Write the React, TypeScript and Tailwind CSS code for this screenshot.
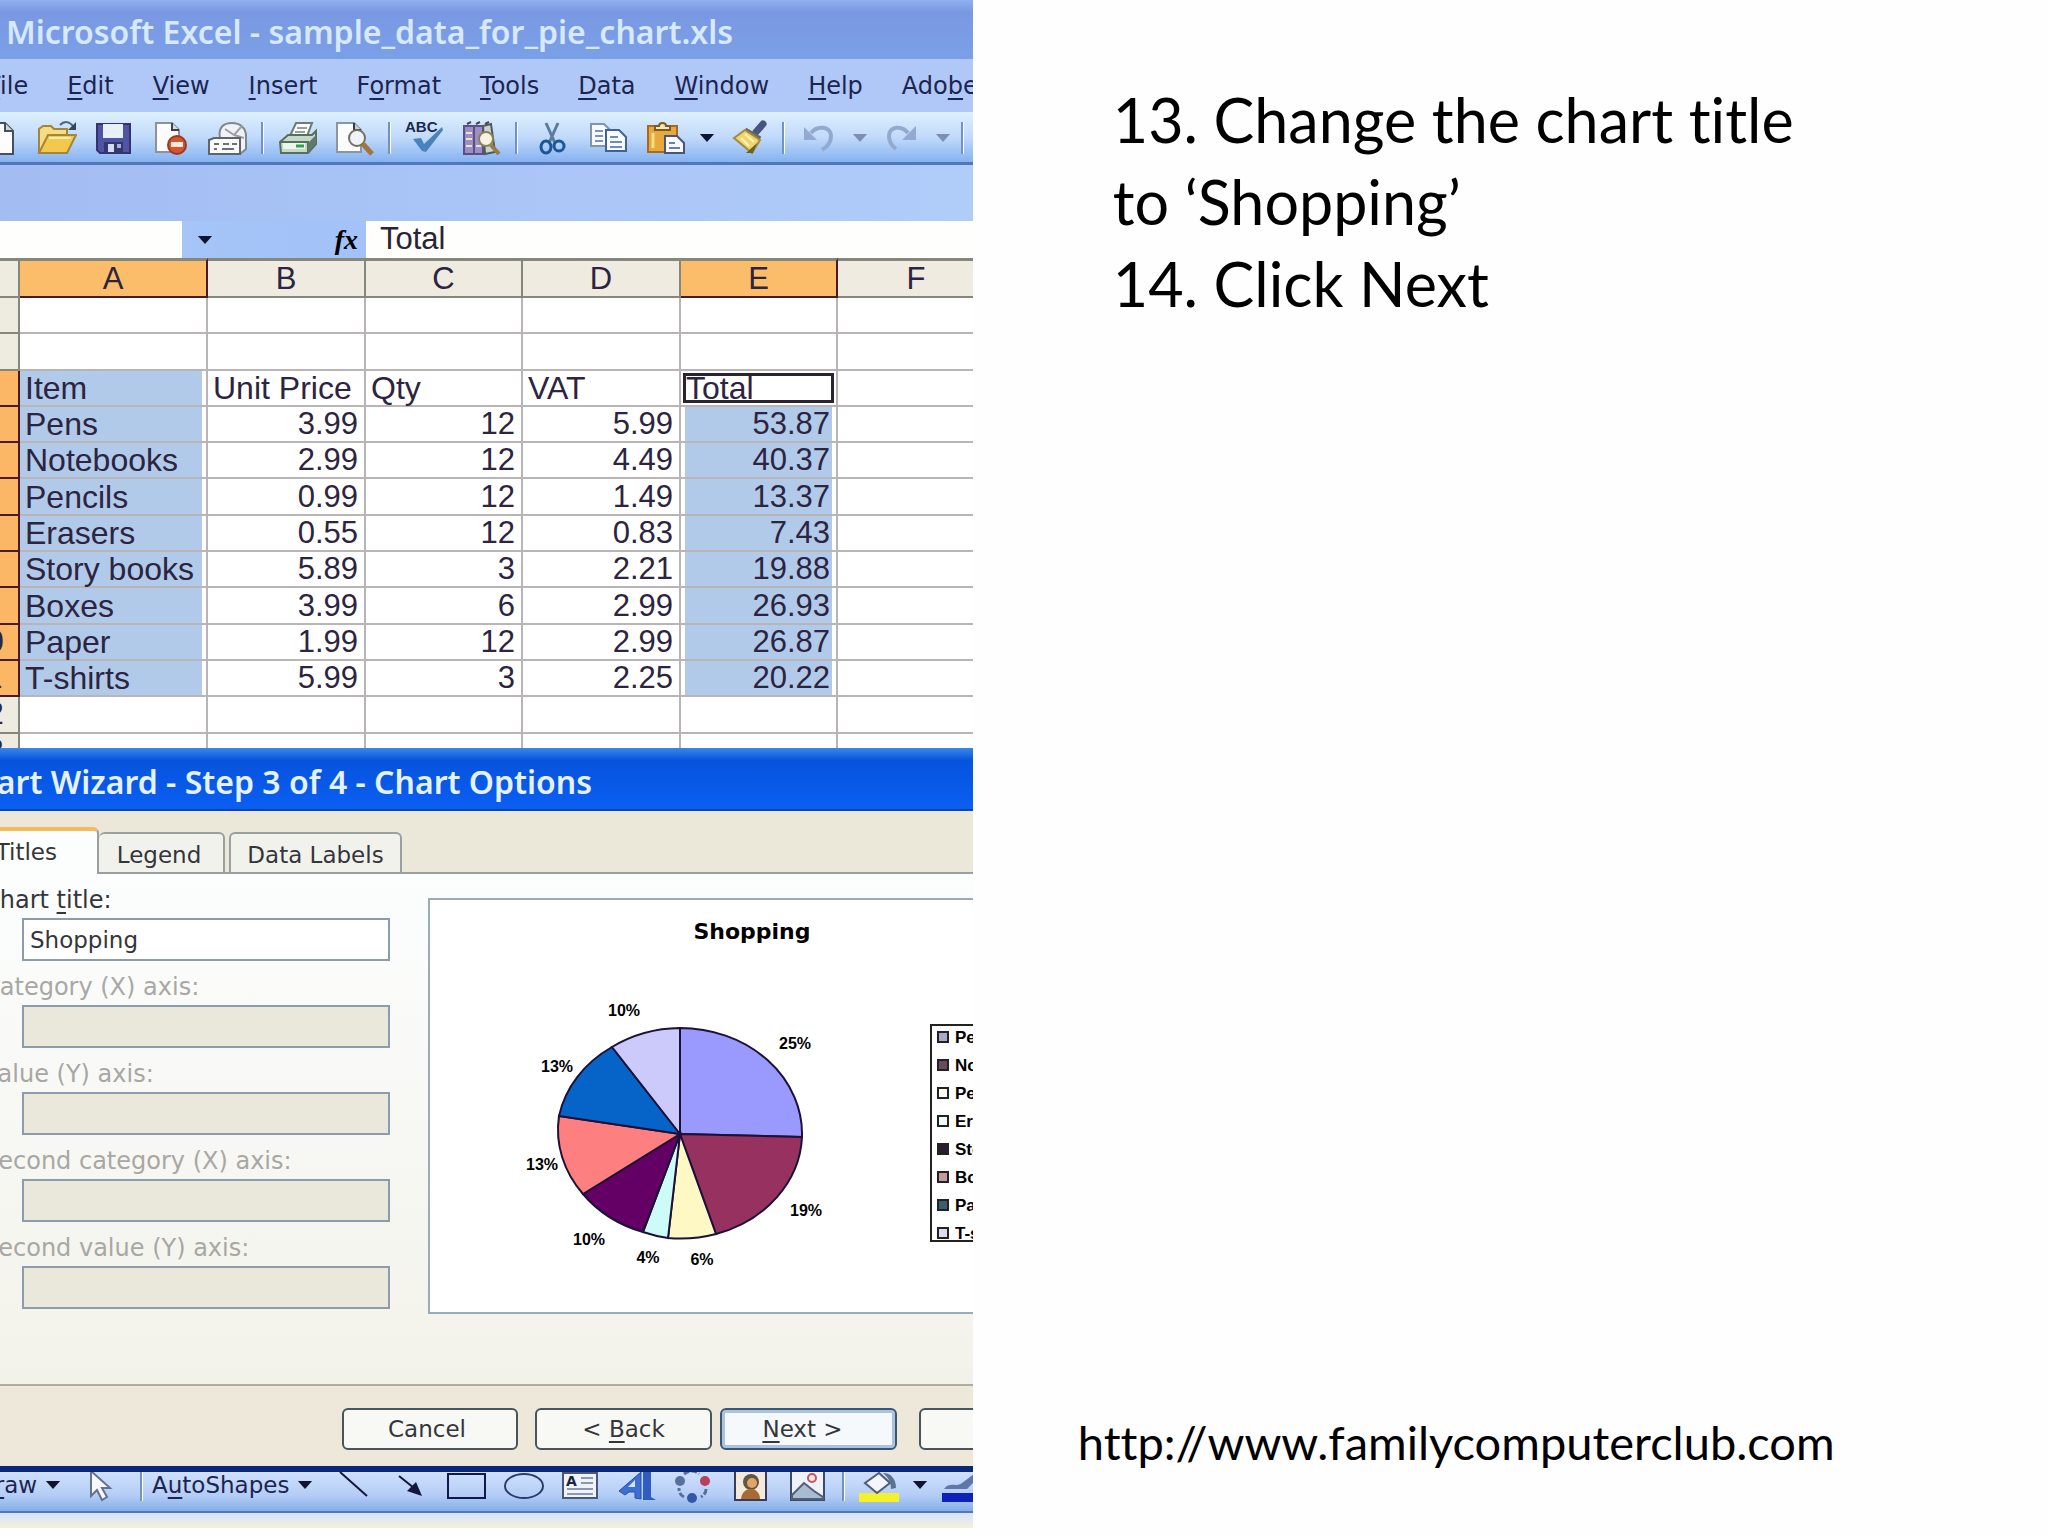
import type { ReactNode } from "react";

const menuItems = [
  { before: "", key: "F", after: "ile" },
  { before: "", key: "E", after: "dit" },
  { before: "", key: "V", after: "iew" },
  { before: "", key: "I", after: "nsert" },
  { before: "F", key: "o", after: "rmat" },
  { before: "", key: "T", after: "ools" },
  { before: "", key: "D", after: "ata" },
  { before: "", key: "W", after: "indow" },
  { before: "", key: "H", after: "elp" },
  { before: "Ado", key: "b", after: "e" },
];

const columns = ["A", "B", "C", "D", "E", "F"];

const rows: string[][] = [
  ["", "", "", "", ""],
  ["", "", "", "", ""],
  ["Item", "Unit Price", "Qty", "VAT", "Total"],
  ["Pens", "3.99", "12", "5.99", "53.87"],
  ["Notebooks", "2.99", "12", "4.49", "40.37"],
  ["Pencils", "0.99", "12", "1.49", "13.37"],
  ["Erasers", "0.55", "12", "0.83", "7.43"],
  ["Story books", "5.89", "3", "2.21", "19.88"],
  ["Boxes", "3.99", "6", "2.99", "26.93"],
  ["Paper", "1.99", "12", "2.99", "26.87"],
  ["T-shirts", "5.99", "3", "2.25", "20.22"],
  ["", "", "", "", ""],
  ["", "", "", "", ""],
];

const axisFields = [
  { id: "category-x", label: "Category (X) axis:" },
  { id: "value-y", label: "Value (Y) axis:" },
  { id: "second-category-x", label: "Second category (X) axis:" },
  { id: "second-value-y", label: "Second value (Y) axis:" },
];

// outer edge of every slice, clockwise from the top
const slices = [
  { from: [250, 128], to: [372, 237], color: "#9a99fd" },
  { from: [372, 237], to: [286, 334], color: "#97315f" },
  { from: [286, 334], to: [238, 338], color: "#fdf8c4" },
  { from: [238, 338], to: [213, 332], color: "#cdfbf8" },
  { from: [213, 332], to: [153, 294], color: "#640065" },
  { from: [153, 294], to: [129, 216], color: "#fd7f7f" },
  { from: [129, 216], to: [182, 147], color: "#0664c8" },
  { from: [182, 147], to: [250, 128], color: "#ccc9fb" },
];

const percents = [
  { x: 365, y: 149, text: "25%" },
  { x: 376, y: 316, text: "19%" },
  { x: 272, y: 365, text: "6%" },
  { x: 218, y: 363, text: "4%" },
  { x: 159, y: 345, text: "10%" },
  { x: 112, y: 270, text: "13%" },
  { x: 127, y: 172, text: "13%" },
  { x: 194, y: 116, text: "10%" },
];

const legend = [
  { name: "Pens", color: "#aaa9cc" },
  { name: "Notebooks", color: "#6b4a5e" },
  { name: "Pencils", color: "#fffdf2" },
  { name: "Erasers", color: "#eefcfc" },
  { name: "Story books", color: "#2b1a30" },
  { name: "Boxes", color: "#c49a9e" },
  { name: "Paper", color: "#3c5f6c" },
  { name: "T-shirts", color: "#dcdcec" },
];

export default function App() {
  return (
    <main className="flex min-h-screen bg-[#fefefe] text-black">
      <section className="w-[47.5%] shrink-0 overflow-hidden">
        <ExcelWindow />
        <ChartWizard />
        <DrawingToolbar />
      </section>
      <section className="flex grow flex-col justify-between pt-[79px] pb-[66px] font-['Lato',sans-serif] [font-variant-ligatures:none]">
        <div className="pl-[140px] text-[61px] leading-[82px]">
          <p>13. Change the chart title<br />to ‘Shopping’</p>
          <p>14. Click Next</p>
        </div>
        <a href="http://www.familycomputerclub.com" className="ml-[105px] text-[47px] leading-[56px]">http://www.familycomputerclub.com</a>
      </section>
    </main>
  );
}

function ExcelWindow() {
  return (
    <div className="font-['DejaVu_Sans',sans-serif] text-[#1c2450]">
      <h1 className="h-[59px] overflow-hidden bg-linear-to-b from-[#8fb0f0] via-[#7a98e2] via-20% to-[#7aa0e8] pl-[6px] font-['Noto_Sans',sans-serif] text-[32px] leading-[64px] font-semibold whitespace-nowrap text-[#d6e9fd]">
        Microsoft Excel - sample_data_for_pie_chart.xls
      </h1>
      <nav className="-ml-3 flex h-[53px] items-center gap-[39px] bg-[#b0c8f8] text-[24px] whitespace-nowrap">
        {menuItems.map((m) => (
          <button key={m.key + m.after}>{m.before}<u className="underline-offset-4">{m.key}</u>{m.after}</button>
        ))}
      </nav>
      <StandardToolbar />
      <div className="h-14 bg-linear-to-r from-[#a3bdf3] to-[#b0ccf9]" />
      <div className="flex h-[37px] bg-linear-to-r from-[#a9c8f8] to-[#96b8f8]">
        <input aria-label="Name box" className="w-[182px] shrink-0 bg-[#fefefc]" />
        <button aria-label="Open name list" className="flex w-[46px] shrink-0 items-center justify-center"><Caret /></button>
        <button className="w-[138px] shrink-0 pr-2 text-right font-['Liberation_Serif',serif] text-[28px] leading-[36px] font-bold text-black italic">fx</button>
        <input aria-label="Formula" defaultValue="Total" className="min-w-0 grow bg-[#fefefc] pl-[14px] font-['Liberation_Sans',sans-serif] text-[31px] text-[#2a2434]" />
      </div>
      <Sheet />
    </div>
  );
}

function Sheet() {
  const isSelected = (row: number) => row >= 2 && row <= 10;

  return (
    <div className="h-[490px] overflow-hidden bg-white font-['Liberation_Sans',sans-serif] text-[#2c2440]">
      <table className="-ml-[45px] h-[512px] w-[1041px] table-fixed border-separate border-spacing-0 text-[31px] leading-[34px]">
        <colgroup>
          <col className="w-[65px]" />
          <col className="w-[188px]" />
          <col className="w-[158px]" />
          <col className="w-[157px]" />
          <col className="w-[158px]" />
          <col className="w-[157px]" />
          <col className="w-[158px]" />
        </colgroup>
        <thead>
          <tr className="h-10">
            <td className="border-t-3 border-r-2 border-b-2 border-[#85867c] bg-[#eeebe0]" />
            {columns.map((c) => (
              <th
                key={c}
                scope="col"
                className={`border-t-3 border-r-2 border-b-2 border-t-[#85867c] p-0 font-normal ${c === "A" || c === "E" ? "border-r-[#4a1a2c] border-b-[#4a1a2c] bg-[#fcbd6a]" : "border-r-[#85867c] border-b-[#85867c] bg-[#efebe1]"}`}
              >
                {c}
              </th>
            ))}
          </tr>
        </thead>
        <tbody>
          {rows.map((row, r) => (
            <tr key={r}>
              <th scope="row" className={`border-r-2 border-b-2 p-0 font-normal ${isSelected(r) ? "border-[#4a1a2c] bg-[#fcb766]" : "border-[#85867c] bg-[#eeebe0]"}`}>
                {r + 1}
              </th>
              {row.map((value, c) => (
                <td
                  key={c}
                  className={`border-r-2 border-b-2 border-[#b9b4b6] p-0 whitespace-nowrap ${r > 2 && c > 0 ? "pr-1.5 text-right" : "pl-[5px] text-[32px]"} ${isSelected(r) && c === 0 ? "bg-[#b1cae9] shadow-[inset_-4px_0_0_#ffffff]" : ""} ${isSelected(r) && r > 2 && c === 4 ? "bg-[#b1cae9] shadow-[inset_4px_0_0_#ffffff,inset_-4px_0_0_#ffffff]" : ""} ${r === 2 && c === 4 ? "shadow-[inset_0_0_0_2px_#ffffff,inset_0_0_0_5px_#2a2430]" : ""}`}
                >
                  {value}
                </td>
              ))}
              <td className="border-r-2 border-b-2 border-[#b9b4b6]" />
            </tr>
          ))}
        </tbody>
      </table>
    </div>
  );
}

function ChartWizard() {
  return (
    <div className="font-['DejaVu_Sans',sans-serif] text-[23px] text-[#35353c]">
      <h2 className="h-[63px] overflow-hidden border-b-2 border-[#0a45b8] bg-linear-to-b from-[#3a86ea] via-[#0753dd] via-20% to-[#0a5ff2] font-['Noto_Sans',sans-serif] text-[32px] leading-[68px] font-semibold whitespace-nowrap text-[#e4f2ff]">
        <span className="-ml-[44px]">Chart Wizard - Step 3 of 4 - Chart Options</span>
      </h2>
      <div role="tablist" className="flex h-[63px] items-end border-b-2 border-[#9aa0a0] bg-[#ebe8d9] whitespace-nowrap">
        <button role="tab" aria-selected="true" className="-mb-0.5 h-[47px] w-[99px] rounded-tr-md border-t-4 border-r-2 border-t-[#f3bb5c] border-r-[#9aa0a0] bg-[#fcfdfd] pr-[40px]">
          <span className="float-right">Titles</span>
        </button>
        <button role="tab" aria-selected="false" className="h-10 w-[126px] rounded-t-md border-2 border-b-0 border-l-0 border-[#9aa0a0] bg-[#f2f2ec] pt-1 pr-1">Legend</button>
        <button role="tab" aria-selected="false" className="ml-1 h-10 w-[173px] rounded-t-md border-2 border-b-0 border-[#9aa0a0] bg-[#f2f2ec] pt-1">Data Labels</button>
      </div>
      <div className="flex h-[512px] border-b-2 border-[#adada2] bg-linear-to-b from-[#fcfefe] to-[#f3f2ea]">
        <form className="w-[428px] shrink-0 whitespace-nowrap">
          <label htmlFor="chart-title" className="-ml-[17px] flex h-11 items-end text-[24px]">Chart&nbsp;<u className="underline-offset-4">t</u>itle:</label>
          <input id="chart-title" defaultValue="Shopping" className="ml-[22px] block h-[43px] w-[368px] border-2 border-[#8c9cac] bg-white pl-1.5" />
          {axisFields.map((f) => (
            <div key={f.id} className="text-[#a9a7a4]">
              <label htmlFor={f.id} className="-ml-[17px] flex h-11 items-end text-[24px]">{f.label}</label>
              <input id={f.id} disabled className="ml-[22px] block h-[43px] w-[368px] border-2 border-[#8c9cac] bg-[#eae8da]" />
            </div>
          ))}
        </form>
        <div className="mt-6 h-[416px] grow overflow-hidden border-2 border-r-0 border-[#9aabba] bg-white">
          <PieChart />
        </div>
      </div>
      <div className="flex h-[80px] items-start overflow-hidden bg-[#ede8d9] pt-[22px] pl-[342px]">
        <button className="h-[42px] w-[176px] shrink-0 rounded-md border-2 border-[#46565c] bg-[#f8f9f5] pr-1.5">Cancel</button>
        <button className="ml-[17px] h-[42px] w-[177px] shrink-0 rounded-md border-2 border-[#46565c] bg-[#f8f9f5]">&lt; <u className="underline-offset-4">B</u>ack</button>
        <button className="ml-2 h-[42px] w-[177px] shrink-0 rounded-md border-2 border-[#3c5670] bg-[#f5f9fb] pr-3 shadow-[inset_0_0_0_3px_#a9c3e2]"><u className="underline-offset-4">N</u>ext &gt;</button>
        <button className="ml-[22px] h-[42px] w-[177px] shrink-0 rounded-md border-2 border-[#46565c] bg-[#f8f9f5]">Finish</button>
      </div>
    </div>
  );
}

function PieChart() {
  return (
    <svg width="620" height="412" viewBox="0 0 620 412" className="font-['Liberation_Sans',sans-serif]" role="img" aria-label="Shopping">
      <text x="322" y="39" textAnchor="middle" className="font-['DejaVu_Sans',sans-serif] text-[22px] font-bold">Shopping</text>
      {slices.map((s) => (
        <path key={s.color} d={`M250 234 L${s.from.join(" ")} A122 106 0 0 1 ${s.to.join(" ")} Z`} fill={s.color} stroke="#1c1238" strokeWidth="2" />
      ))}
      {percents.map((p) => (
        <text key={`${p.x}-${p.y}`} x={p.x} y={p.y} textAnchor="middle" className="text-[16px] font-bold">{p.text}</text>
      ))}
      <rect x="501" y="125" width="110" height="216" fill="#fff" stroke="#222" strokeWidth="2" />
      {legend.map((l, i) => (
        <g key={l.name}>
          <rect x="508" y={132 + i * 28} width="10" height="10" fill={l.color} stroke="#222" strokeWidth="2" />
          <text x="525" y={143 + i * 28} className="text-[17px] font-bold">{l.name}</text>
        </g>
      ))}
    </svg>
  );
}

function Caret({ color = "#101430" }: { color?: string }) {
  return (
    <svg width="16" height="8" viewBox="0 0 18 9"><path d="M1 0h16L9 9z" fill={color} /></svg>
  );
}

function ToolButton({ label, children }: { label: string; children: ReactNode }) {
  return (
    <button aria-label={label} className="flex w-[57px] shrink-0 justify-center">
      <svg width="40" height="40" viewBox="0 0 40 40" fill="none">{children}</svg>
    </button>
  );
}

function Separator() {
  return (
    <div className="flex w-[13px] shrink-0 justify-center">
      <div className="h-8 w-[3px] border-r border-l-2 border-r-white border-l-[#7292c4]" />
    </div>
  );
}

function DropButton({ label, color }: { label: string; color?: string }) {
  return (
    <button aria-label={label} className="flex w-[26px] shrink-0 items-center justify-center px-1"><Caret color={color} /></button>
  );
}

function StandardToolbar() {
  return (
    <div className="h-[53px] border-b-3 border-[#5078b8] bg-linear-to-b from-[#ddf0fe] via-[#c2dafa] via-50% to-[#86b2f0]">
      <div className="-ml-[29px] flex h-[52px] items-center">
        <ToolButton label="New">
          <path d="M8 5h17l8 8v23H8z" fill="#fdfdfd" stroke="#44505c" strokeWidth="2" />
          <path d="M25 5v8h8" fill="#cdd6dd" stroke="#44505c" strokeWidth="2" />
        </ToolButton>
        <ToolButton label="Open">
          <path d="M2 35V11l4-3h8l3 3h13v7" fill="#f6dd84" stroke="#a5853c" strokeWidth="2" />
          <path d="M2 35l9-18h28l-9 18z" fill="#f2c94c" stroke="#a5853c" strokeWidth="2" />
          <path d="M12 20h22" stroke="#fcf0ae" strokeWidth="2" />
          <path d="M23 7c4-4 9-4 13 1" stroke="#4b6480" strokeWidth="2" />
          <path d="M39 4v8h-8z" fill="#34485c" />
        </ToolButton>
        <ToolButton label="Save">
          <path d="M3 6h33v29H6l-3-3z" fill="#5153a4" stroke="#32346f" strokeWidth="2" />
          <rect x="9" y="6" width="20" height="14" fill="#e8f1fb" />
          <rect x="10" y="24" width="19" height="11" fill="#35376f" />
          <rect x="14" y="26" width="6" height="8" fill="#d5dcf0" />
          <rect x="23" y="26" width="4" height="4" fill="#a9b0da" />
        </ToolButton>
        <ToolButton label="Permission">
          <path d="M5 5h16l7 7v22H5z" fill="#fdfcfa" stroke="#8b929d" strokeWidth="2" />
          <path d="M21 5v7h7" fill="#d8dde4" stroke="#39424e" strokeWidth="2" />
          <circle cx="26" cy="27" r="9" fill="#d9532e" stroke="#973b26" strokeWidth="2" />
          <rect x="20" y="24" width="12" height="5" fill="#fbe9d8" />
        </ToolButton>
        <ToolButton label="E-mail">
          <path d="M12 20c-2-10 3-15 12-15 8 0 14 5 14 13v13l-6 5" fill="#f1f2f5" stroke="#80868e" strokeWidth="2" />
          <path d="M17 11l9 6 8-9M26 17l10 3" stroke="#9aa0a8" strokeWidth="2" />
          <path d="M6 20h26v16H1V22z" fill="#fbfbf8" stroke="#5d646d" strokeWidth="2" />
          <path d="M6 26h5M15 26h6M24 26h5M6 31h3M14 31h12" stroke="#667080" strokeWidth="2" />
        </ToolButton>
        <Separator />
        <ToolButton label="Print">
          <path d="M12 18l6-13h16l-5 13z" fill="#fcfdfb" stroke="#6a7c74" strokeWidth="2" />
          <path d="M19 10h10M17 14h10" stroke="#8fa49a" strokeWidth="2" />
          <path d="M2 24l8-7h24l4-4v13l-8 9H3z" fill="#c7d8ca" stroke="#55705f" strokeWidth="2" />
          <path d="M3 24h27v11" fill="none" stroke="#55705f" strokeWidth="2" />
          <rect x="5" y="25" width="22" height="6" fill="#eef6ec" />
          <path d="M18 28h8" stroke="#2fa24d" strokeWidth="3" />
          <path d="M30 25l8-8v8l-8 9z" fill="#5f7a6a" />
        </ToolButton>
        <ToolButton label="Print preview">
          <path d="M2 5h17l7 7v22H2z" fill="#fdfdfd" stroke="#8b95a4" strokeWidth="2" />
          <path d="M19 5v7h7" fill="#c5cedb" stroke="#2f3b4c" strokeWidth="2" />
          <path d="M28 26l9 10" stroke="#a5743c" strokeWidth="5" />
          <circle cx="22" cy="20" r="8" fill="#eef4fa" stroke="#77705f" strokeWidth="2" />
        </ToolButton>
        <Separator />
        <ToolButton label="Spelling">
          <text x="0" y="14" fill="#1d2a50" className="font-['Liberation_Sans',sans-serif] text-[15px] font-bold">ABC</text>
          <path d="M8 21l8-1 3 6L37 9l1 3-17 22-4-1z" fill="#4a83bc" />
        </ToolButton>
        <ToolButton label="Research">
          <path d="M2 8h10v28H2zM12 8h9v28h-9z" fill="#9b8fc4" stroke="#5a4f88" strokeWidth="2" />
          <path d="M4 15h6M4 21h6M4 28h6M14 28h5" stroke="#f0e2c0" strokeWidth="2" />
          <path d="M5 6l4-2M14 6l4-2M23 6l4-2" stroke="#4a4458" strokeWidth="2" />
          <path d="M21 8l8-2 4 28-10 2z" fill="#c9d3cb" stroke="#4e5b58" strokeWidth="2" />
          <path d="M29 27l8 9" stroke="#9b7a42" strokeWidth="4" />
          <circle cx="24" cy="21" r="7" fill="#f6f3df" stroke="#8b835f" strokeWidth="2" />
        </ToolButton>
        <Separator />
        <ToolButton label="Cut">
          <path d="M14 5l9 20M26 5l-9 20" stroke="#5a7c9e" strokeWidth="3" />
          <ellipse cx="14" cy="29" rx="5" ry="6" stroke="#1d5698" strokeWidth="3" />
          <ellipse cx="27" cy="28" rx="5" ry="5" stroke="#1d5698" strokeWidth="3" />
        </ToolButton>
        <ToolButton label="Copy">
          <path d="M2 6h13l6 6v16H2z" fill="#f6f9fd" stroke="#8393a8" strokeWidth="2" />
          <path d="M6 13h8M6 18h8M6 23h8" stroke="#7e93b4" strokeWidth="2" />
          <path d="M17 12h13l7 7v14H17z" fill="#f9fbfe" stroke="#3d639d" strokeWidth="2" />
          <path d="M21 19h8M21 24h12M21 29h12" stroke="#6a8cc0" strokeWidth="2" />
        </ToolButton>
        <ToolButton label="Paste">
          <path d="M2 8h29v26H2z" fill="#e8a93c" stroke="#a66a24" strokeWidth="2" />
          <path d="M9 12V8h4c0-4 7-4 7 0h4v4z" fill="#f5e8ac" stroke="#7a5a28" strokeWidth="2" />
          <path d="M7 15v15" stroke="#f8dc82" strokeWidth="3" />
          <path d="M19 18h12l7 7v10H19z" fill="#f7f9fd" stroke="#4a5678" strokeWidth="2" />
          <path d="M23 25h6M23 30h11" stroke="#6a80ac" strokeWidth="2" />
        </ToolButton>
        <DropButton label="Paste options" />
        <ToolButton label="Format painter">
          <path d="M27 14l7-8" stroke="#4a5480" strokeWidth="7" strokeLinecap="round" />
          <path d="M16 12l15 9" stroke="#6a6a58" strokeWidth="5" />
          <path d="M16 12l15 10-8 13L5 20z" fill="#f0d56c" stroke="#a28c44" strokeWidth="2" />
          <path d="M12 20l8 8M16 16l9 8" stroke="#fdf3ba" strokeWidth="2" />
          <path d="M17 35h7l4-10z" fill="#6b6228" />
        </ToolButton>
        <Separator />
        <ToolButton label="Undo">
          <path d="M12 15c6-8 20-7 20 3 0 7-4 11-9 14" stroke="#93a9cf" strokeWidth="4" />
          <path d="M5 9v13h13z" fill="#93a9cf" />
        </ToolButton>
        <DropButton label="Undo history" color="#7d90b4" />
        <ToolButton label="Redo">
          <path d="M26 15C20 7 7 8 7 18c0 6 3 10 7 13" stroke="#93a9cf" strokeWidth="4" />
          <path d="M34 8v14H20z" fill="#93a9cf" />
        </ToolButton>
        <DropButton label="Redo history" color="#7d90b4" />
        <Separator />
      </div>
    </div>
  );
}

function DrawingToolbar() {
  return (
    <div className="font-['DejaVu_Sans',sans-serif] text-[#1c2450]">
      <div className="h-[47px] overflow-hidden border-t-6 border-b-2 border-t-[#0b2878] border-b-[#5078b8] bg-linear-to-b from-[#cfe0fc] via-[#b4cdf6] via-60% to-[#84aee6]">
        <div className="-ml-[23px] flex h-[26px] items-center text-[23px] whitespace-nowrap">
          <button className="flex w-[89px] shrink-0 items-center gap-2"><span>D<u className="underline-offset-4">r</u>aw</span><Caret /></button>
          <ToolButton label="Select objects">
            <path d="M16 6v25l6-6 5 10 5-3-5-9h8z" fill="#f6f8fc" stroke="#67728c" strokeWidth="2" />
          </ToolButton>
          <div className="w-3 shrink-0" />
          <Separator />
          <button className="ml-1 flex w-[172px] shrink-0 items-center gap-2"><span>A<u className="underline-offset-4">u</u>toShapes</span><Caret /></button>
          <ToolButton label="Line">
            <path d="M7 7l27 24" stroke="#12183c" strokeWidth="2" />
          </ToolButton>
          <ToolButton label="Arrow">
            <path d="M9 11l15 12" stroke="#12183c" strokeWidth="2" />
            <path d="M32 31l-15-5 9-9z" fill="#12183c" />
          </ToolButton>
          <ToolButton label="Rectangle">
            <rect x="1" y="9" width="37" height="24" stroke="#12184c" strokeWidth="2" />
          </ToolButton>
          <ToolButton label="Oval">
            <ellipse cx="20" cy="21" rx="19" ry="12" stroke="#2c3c6c" strokeWidth="2" />
          </ToolButton>
          <ToolButton label="Text box">
            <rect x="2" y="8" width="34" height="25" fill="#eef3fa" stroke="#4a5878" strokeWidth="2" />
            <text x="5" y="21" fill="#1a2340" className="text-[14px] font-bold">A</text>
            <path d="M20 13h12M20 18h12M6 24h26M6 29h26" stroke="#8b98b4" strokeWidth="2" />
          </ToolButton>
          <ToolButton label="WordArt">
            <path d="M1 26L23 7v27l-6-1v-6h-6l-4 3z" fill="#3d6fd0" stroke="#2450a8" strokeWidth="1" />
            <path d="M17 15v7h-7z" fill="#d6e4fc" />
            <path d="M25 6h8v26l5 3H25z" fill="#2f5cc0" />
          </ToolButton>
          <ToolButton label="Diagram">
            <circle cx="5" cy="16" r="5" fill="#56719c" />
            <circle cx="30" cy="16" r="5" fill="#b8405c" />
            <circle cx="17" cy="33" r="5" fill="#3458a8" />
            <path d="M9 9c5-4 11-4 15 0M31 24c0 4-2 6-5 8M9 32c-4-2-5-5-5-9" stroke="#5a6f98" strokeWidth="3" strokeDasharray="6 2" />
          </ToolButton>
          <ToolButton label="Clip art">
            <rect x="3" y="6" width="31" height="29" fill="#f3eadc" stroke="#3b3b58" strokeWidth="2" />
            <circle cx="19" cy="17" r="8" fill="#5f5648" />
            <circle cx="20" cy="18" r="5" fill="#e2a565" />
            <path d="M9 34c1-8 6-10 10-10s9 3 9 10z" fill="#a86a32" />
          </ToolButton>
          <ToolButton label="Picture">
            <rect x="2" y="6" width="33" height="29" fill="#f0f2fa" stroke="#3d4a70" strokeWidth="2" />
            <circle cx="23" cy="13" r="4" fill="#fbe0dc" stroke="#c05860" strokeWidth="2" />
            <path d="M3 30l12-12 10 8 9 6v2H3z" fill="#a8bcd2" stroke="#4d6078" strokeWidth="2" />
          </ToolButton>
          <Separator />
          <ToolButton label="Fill color">
            <rect x="0" y="28" width="40" height="9" fill="#f4f12c" />
            <path d="M6 18L20 8l11 10-13 10z" fill="#f2f5fa" stroke="#4e5c78" strokeWidth="2" />
            <path d="M24 8c8 0 13 6 13 15l-5 1c0-6-2-11-8-16z" fill="#5b7290" />
          </ToolButton>
          <DropButton label="Fill color options" />
          <ToolButton label="Line color">
            <rect x="0" y="28" width="40" height="9" fill="#0c22b8" />
            <path d="M2 24c6-8 12-1 18-6L36 6l3 4-14 14z" fill="#5f78ac" />
          </ToolButton>
        </div>
      </div>
      <div className="h-[15px] bg-linear-to-b from-[#d5e2fb] to-[#f6f0dc]" />
    </div>
  );
}
